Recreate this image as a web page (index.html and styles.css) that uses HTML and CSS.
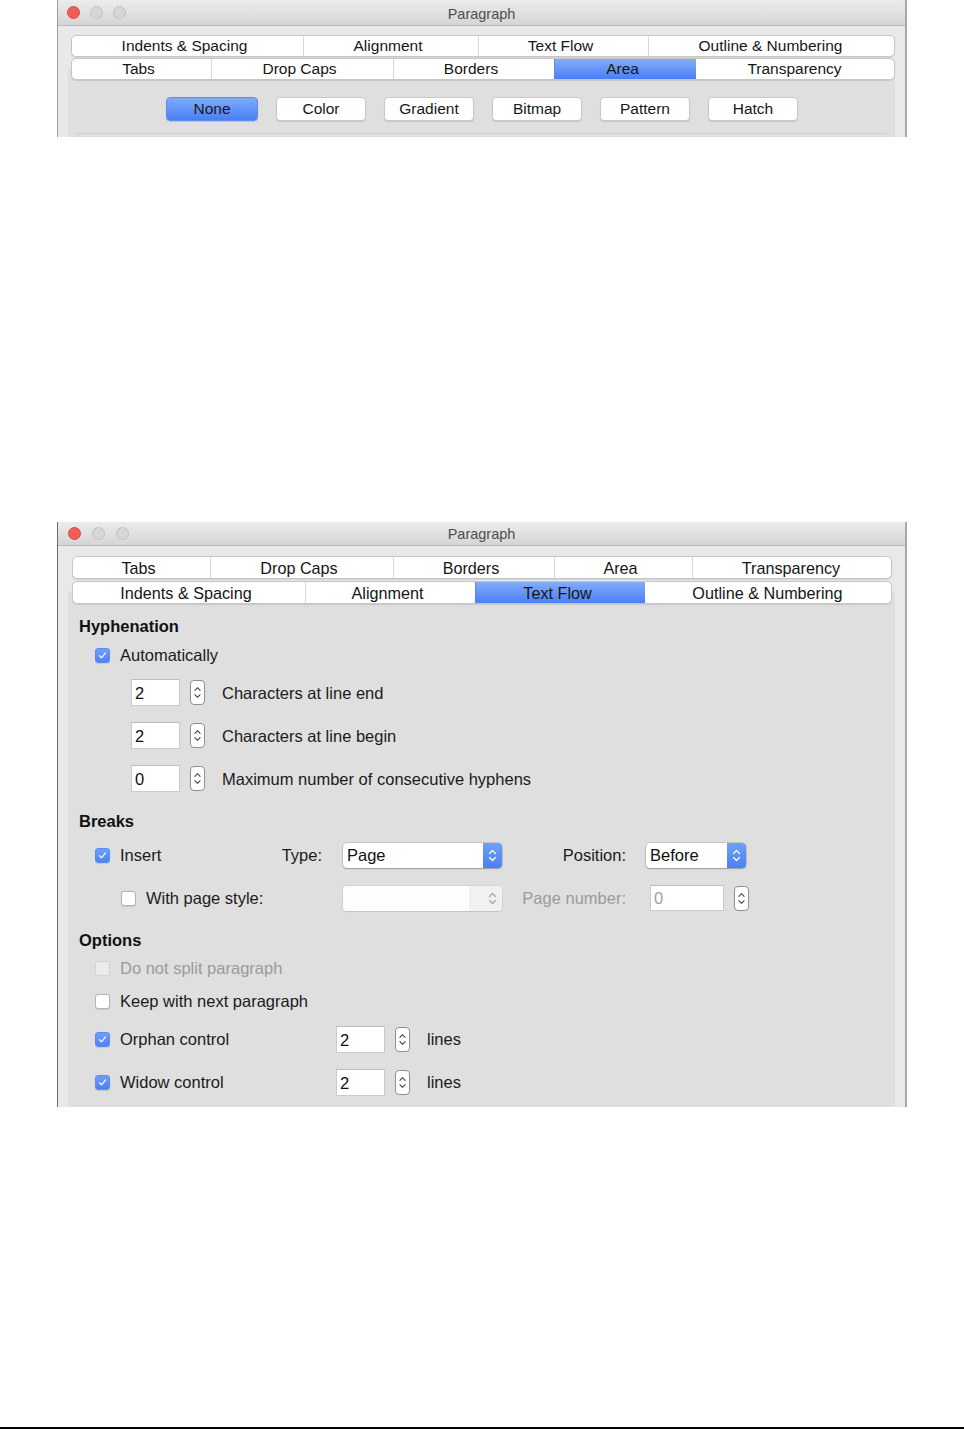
FILE: index.html
```html
<!DOCTYPE html>
<html lang="en">
<head>
<meta charset="utf-8">
<title>Paragraph dialogs</title>
<link rel="stylesheet" href="styles.css">
</head>
<body>
<div class="page">

  <section class="dlg dlg1">
    <header class="titlebar">
      <div class="lights"><span class="light red"></span><span class="light"></span><span class="light"></span></div>
      <div class="title">Paragraph</div>
      <div></div>
    </header>
    <div class="dbody">
      <div class="tabs">
        <div class="tabrow t1a">
          <div class="tab">Indents &amp; Spacing</div>
          <div class="tab">Alignment</div>
          <div class="tab">Text Flow</div>
          <div class="tab">Outline &amp; Numbering</div>
        </div>
        <div class="tabrow t1b">
          <div class="tab">Tabs</div>
          <div class="tab">Drop Caps</div>
          <div class="tab">Borders</div>
          <div class="tab sel">Area</div>
          <div class="tab">Transparency</div>
        </div>
      </div>
      <div class="panel panel1">
        <div class="btnrow">
          <div class="btn sel">None</div>
          <div class="btn">Color</div>
          <div class="btn">Gradient</div>
          <div class="btn">Bitmap</div>
          <div class="btn">Pattern</div>
          <div class="btn">Hatch</div>
        </div>
        <div class="subpanel"></div>
      </div>
    </div>
  </section>

  <section class="dlg dlg2">
    <header class="titlebar">
      <div class="lights"><span class="light red"></span><span class="light"></span><span class="light"></span></div>
      <div class="title">Paragraph</div>
      <div></div>
    </header>
    <div class="dbody">
      <div class="tabs">
        <div class="tabrow t2a">
          <div class="tab">Tabs</div>
          <div class="tab">Drop Caps</div>
          <div class="tab">Borders</div>
          <div class="tab">Area</div>
          <div class="tab">Transparency</div>
        </div>
        <div class="tabrow t2b">
          <div class="tab">Indents &amp; Spacing</div>
          <div class="tab">Alignment</div>
          <div class="tab sel">Text Flow</div>
          <div class="tab">Outline &amp; Numbering</div>
        </div>
      </div>
      <div class="panel panel2">
        <h2 class="head h-hyph">Hyphenation</h2>
        <div class="row chkrow r-auto">
          <span class="cb on"><svg viewBox="0 0 15 15"><path d="M4 7.8 L6.4 10.2 L11 4.6"/></svg></span>
          <span class="lbl">Automatically</span>
        </div>
        <div class="row spinrow r-s1">
          <span class="field">2</span>
          <span class="spin"><svg viewBox="0 0 15 25"><path d="M4.5 10 L7.5 7 L10.5 10 M4.5 15 L7.5 18 L10.5 15"/></svg></span>
          <span class="lbl">Characters at line end</span>
        </div>
        <div class="row spinrow r-s2">
          <span class="field">2</span>
          <span class="spin"><svg viewBox="0 0 15 25"><path d="M4.5 10 L7.5 7 L10.5 10 M4.5 15 L7.5 18 L10.5 15"/></svg></span>
          <span class="lbl">Characters at line begin</span>
        </div>
        <div class="row spinrow r-s3">
          <span class="field">0</span>
          <span class="spin"><svg viewBox="0 0 15 25"><path d="M4.5 10 L7.5 7 L10.5 10 M4.5 15 L7.5 18 L10.5 15"/></svg></span>
          <span class="lbl">Maximum number of consecutive hyphens</span>
        </div>

        <h2 class="head h-breaks">Breaks</h2>
        <div class="brkgrid r-insert">
          <div class="bcell1">
            <span class="cb on"><svg viewBox="0 0 15 15"><path d="M4 7.8 L6.4 10.2 L11 4.6"/></svg></span>
            <span class="lbl">Insert</span>
            <span class="grow"></span>
            <span class="lbl rlbl">Type:</span>
          </div>
          <div class="select">
            <span class="selval">Page</span>
            <span class="cap"><svg viewBox="0 0 19 25"><path d="M6.5 10.5 L9.5 7.5 L12.5 10.5 M6.5 14.5 L9.5 17.5 L12.5 14.5"/></svg></span>
          </div>
          <div class="bcell3"><span class="lbl rlbl">Position:</span></div>
          <div class="select sel-pos">
            <span class="selval">Before</span>
            <span class="cap"><svg viewBox="0 0 19 25"><path d="M6.5 10.5 L9.5 7.5 L12.5 10.5 M6.5 14.5 L9.5 17.5 L12.5 14.5"/></svg></span>
          </div>
        </div>
        <div class="brkgrid r-pstyle">
          <div class="bcell1 indent">
            <span class="cb"></span>
            <span class="lbl">With page style:</span>
          </div>
          <div class="select disabled">
            <span class="selval"></span>
            <span class="cap"><svg viewBox="0 0 19 25"><path d="M6.5 10.5 L9.5 7.5 L12.5 10.5 M6.5 14.5 L9.5 17.5 L12.5 14.5"/></svg></span>
          </div>
          <div class="bcell3"><span class="lbl rlbl dim">Page number:</span></div>
          <div class="pnum">
            <span class="field wide dim">0</span>
            <span class="spin"><svg viewBox="0 0 15 25"><path d="M4.5 10 L7.5 7 L10.5 10 M4.5 15 L7.5 18 L10.5 15"/></svg></span>
          </div>
        </div>

        <h2 class="head h-opts">Options</h2>
        <div class="row chkrow r-split">
          <span class="cb off"></span>
          <span class="lbl dim">Do not split paragraph</span>
        </div>
        <div class="row chkrow r-keep">
          <span class="cb"></span>
          <span class="lbl">Keep with next paragraph</span>
        </div>
        <div class="row optrow r-orphan">
          <div class="ocell">
            <span class="cb on"><svg viewBox="0 0 15 15"><path d="M4 7.8 L6.4 10.2 L11 4.6"/></svg></span>
            <span class="lbl">Orphan control</span>
          </div>
          <span class="field">2</span>
          <span class="spin"><svg viewBox="0 0 15 25"><path d="M4.5 10 L7.5 7 L10.5 10 M4.5 15 L7.5 18 L10.5 15"/></svg></span>
          <span class="lbl lines">lines</span>
        </div>
        <div class="row optrow r-widow">
          <div class="ocell">
            <span class="cb on"><svg viewBox="0 0 15 15"><path d="M4 7.8 L6.4 10.2 L11 4.6"/></svg></span>
            <span class="lbl">Widow control</span>
          </div>
          <span class="field">2</span>
          <span class="spin"><svg viewBox="0 0 15 25"><path d="M4.5 10 L7.5 7 L10.5 10 M4.5 15 L7.5 18 L10.5 15"/></svg></span>
          <span class="lbl lines">lines</span>
        </div>
      </div>
    </div>
  </section>

  <div class="rule"></div>
</div>
</body>
</html>
```

FILE: styles.css
```css
* { box-sizing: border-box; }

html, body {
  margin: 0;
  padding: 0;
  background: #ffffff;
}

body {
  font-family: "Liberation Sans", Arial, Helvetica, sans-serif;
  color: #1b1b1b;
}

.page {
  width: 964px;
  height: 1429px;
  display: flex;
  flex-direction: column;
}

/* ---------- dialog frame ---------- */
.dlg {
  margin-left: 57px;
  width: 850px;
  background: #e9e9e9;
  border-left: 1px solid #9c9c9c;
  border-right: 2px solid #a9a9a9;
  display: flex;
  flex-direction: column;
  overflow: hidden;
  flex: none;
}

.dlg1 { height: 137px; }
.dlg2 { height: 585px; margin-top: 385px; border-left-color: #6b6b6b; }

.titlebar {
  display: grid;
  grid-template-columns: 1fr auto 1fr;
  align-items: center;
  background: linear-gradient(#ececec, #d5d5d5);
  border-bottom: 1px solid #b9b9b9;
  flex: none;
}
.dlg1 .titlebar { height: 26px; border-top-right-radius: 5px; }
.dlg2 .titlebar { height: 24px; }

.lights {
  display: flex;
  gap: 10px;
  padding-left: 9px;
}
.dlg2 .lights { padding-left: 10px; gap: 11px; }

.light {
  width: 13px;
  height: 13px;
  border-radius: 50%;
  background: #d6d6d6;
  border: 1px solid #c2c2c2;
}
.light.red {
  background: #ef5f57;
  border-color: #da4a42;
}

.title {
  font-size: 14.5px;
  color: #4e4e4e;
  line-height: 1;
}
.dlg1 .title { padding-top: 3px; }
.dlg2 .title { padding-top: 1px; }

.dbody {
  flex: 1;
  display: flex;
  flex-direction: column;
}
.dlg1 .dbody { padding-top: 9px; }
.dlg2 .dbody { padding-top: 10px; }

/* ---------- tabs ---------- */
.tabs {
  position: relative;
  z-index: 1;
  display: flex;
  flex-direction: column;
}
.dlg1 .tabs { margin-left: 13px; width: 824px; gap: 1px; }
.dlg2 .tabs { margin-left: 14px; width: 820px; gap: 2px; }

.tabrow {
  display: grid;
  background: #ffffff;
  border: 1px solid #c6c6c6;
  border-radius: 5px;
  box-shadow: 0 1px 1px rgba(0, 0, 0, 0.10);
  overflow: hidden;
}
.dlg1 .tabrow { height: 22px; font-size: 15.5px; }
.dlg2 .tabrow { height: 23px; font-size: 16.2px; }

.t1a { grid-template-columns: 231px 175px 170px 1fr; }
.t1b { grid-template-columns: 139px 182px 161px 142px 1fr; }
.t2a { grid-template-columns: 137px 183px 161px 138px 1fr; }
.t2b { grid-template-columns: 232px 170px 170px 1fr; }

.tab {
  display: flex;
  align-items: center;
  justify-content: center;
  border-left: 1px solid #d9d9d9;
  white-space: nowrap;
  color: #161616;
  padding-right: 6px;
}
.dlg2 .tab { padding-top: 2px; }
.tab:last-child { padding-right: 2px; }
.tab:first-child { border-left: none; }
.tab.sel {
  background: linear-gradient(#84acf8, #4a7ff5);
  border-left-color: #5b8bf0;
}
.tab.sel + .tab { border-left-color: transparent; }

/* ---------- panels ---------- */
.panel {
  background: #dfdfdf;
  margin-left: 10px;
  margin-right: 10px;
  flex: 1;
}

.panel1 {
  margin-top: -11px;
  padding-top: 28px;
  display: flex;
  flex-direction: column;
}

.btnrow {
  display: flex;
  justify-content: center;
  gap: 18px;
  padding-left: 1px;
}

.btn {
  width: 90px;
  height: 24px;
  display: flex;
  align-items: center;
  justify-content: center;
  background: #ffffff;
  border: 1px solid #c8c8c8;
  border-radius: 4px;
  box-shadow: 0 1px 1px rgba(0, 0, 0, 0.12);
  font-size: 15.5px;
  color: #181818;
}
.btn.sel {
  width: 92px;
  background: linear-gradient(#7eaaf8, #4a7ff5);
  border-color: #5d8de8;
}

.subpanel {
  margin: 12px 8px 0 9px;
  border-top: 1px solid #cfcfcf;
  flex: 1;
}

.panel2 {
  margin-top: -12px;
  padding: 25px 0 0 11px;
  display: flex;
  flex-direction: column;
  font-size: 16.5px;
}

.head {
  margin: 0;
  font-size: 16.5px;
  font-weight: bold;
  height: 18px;
  line-height: 18px;
  color: #111;
}
.h-breaks { margin-top: 20px; }
.h-opts { margin-top: 20px; }

.row {
  display: flex;
  align-items: center;
}

.lbl {
  white-space: nowrap;
  line-height: 1;
  color: #1b1b1b;
}
.lbl.dim { color: #9b9b9b; }

.chkrow {
  height: 22px;
  margin-left: 16px;
  gap: 10px;
}
.r-auto { margin-top: 9px; }
.r-split { margin-top: 8px; }
.r-keep { margin-top: 11px; }

/* checkbox */
.cb {
  width: 15px;
  height: 15px;
  border-radius: 3px;
  background: #ffffff;
  border: 1px solid #b3b3b3;
  box-shadow: 0 0.5px 1px rgba(0, 0, 0, 0.10);
  flex: none;
  display: flex;
}
.cb.on {
  background: linear-gradient(#6d9ff9, #4a81f6);
  border-color: #5a8cf0;
}
.cb.off {
  background: #ebebeb;
  border-color: #d3d3d3;
  box-shadow: none;
}
.cb svg {
  width: 13px;
  height: 13px;
  fill: none;
  stroke: #ffffff;
  stroke-width: 1.4;
  stroke-linecap: round;
  stroke-linejoin: round;
}

/* spin field */
.spinrow {
  height: 27px;
  margin-left: 52px;
  margin-top: 16px;
}
.r-s1 { margin-top: 13px; }

.field {
  width: 49px;
  height: 27px;
  background: #ffffff;
  border: 1px solid #cbcbcb;
  border-top-color: #bdbdbd;
  display: flex;
  align-items: center;
  padding-left: 3px;
  padding-top: 1px;
  font-size: 16.5px;
  color: #111;
  flex: none;
}
.field.wide { width: 74px; height: 26px; }
.field.dim { color: #a2a2a2; }

.spin {
  width: 15px;
  height: 25px;
  margin-left: 10px;
  background: #ffffff;
  border: 1px solid #8f8f8f;
  border-radius: 4px;
  flex: none;
  display: flex;
}
.spin svg {
  width: 13px;
  height: 23px;
  fill: none;
  stroke: #3c3c3c;
  stroke-width: 1.2;
  stroke-linecap: round;
  stroke-linejoin: round;
}
.spinrow .lbl { margin-left: 17px; padding-top: 1px; }

/* breaks grid */
.brkgrid {
  display: grid;
  grid-template-columns: 248px 159px 144px 110px;
  margin-left: 16px;
  height: 26px;
  align-items: center;
}
.r-insert { margin-top: 12px; }
.r-pstyle { margin-top: 17px; }

.bcell1 {
  display: flex;
  align-items: center;
  gap: 10px;
  height: 100%;
}
.bcell1.indent { padding-left: 26px; }
.grow { flex: 1; }
.rlbl { padding-right: 21px; }
.bcell3 {
  display: flex;
  justify-content: flex-end;
  align-items: center;
}
.bcell3 .rlbl { padding-right: 20px; }

.select {
  height: 25px;
  display: flex;
  background: #ffffff;
  border-radius: 4px;
  box-shadow: 0 0 0 0.5px rgba(0, 0, 0, 0.22), 0 1px 1.5px rgba(0, 0, 0, 0.22);
  overflow: hidden;
}
.sel-pos { width: 100px; }
.selval {
  flex: 1;
  display: flex;
  align-items: center;
  padding-left: 4px;
  font-size: 16.5px;
  color: #111;
}
.cap {
  width: 19px;
  flex: none;
  background: linear-gradient(#6fa0f8, #4a80f5);
  display: flex;
}
.cap svg {
  width: 19px;
  height: 25px;
  fill: none;
  stroke: #ffffff;
  stroke-width: 1.3;
  stroke-linecap: round;
  stroke-linejoin: round;
}
.select.disabled {
  background: #f9f9f9;
  box-shadow: 0 0 0 0.5px rgba(0, 0, 0, 0.10), 0 1px 1px rgba(0, 0, 0, 0.08);
}
.select.disabled .selval { background: #fdfdfd; }
.select.disabled .cap {
  width: 33px;
  background: #f1f1f1;
  justify-content: flex-end;
}
.select.disabled .cap svg { stroke: #a9a9a9; }

.pnum {
  display: flex;
  align-items: center;
  margin-left: 4px;
}

/* options rows */
.optrow {
  height: 27px;
  margin-left: 16px;
}
.r-orphan { margin-top: 14px; }
.r-widow { margin-top: 16px; }
.ocell {
  width: 241px;
  display: flex;
  align-items: center;
  gap: 10px;
  flex: none;
}
.lbl.lines { margin-left: 17px; }

/* bottom rule */
.rule {
  margin-top: auto;
  height: 2px;
  background: #000000;
  flex: none;
}
```
